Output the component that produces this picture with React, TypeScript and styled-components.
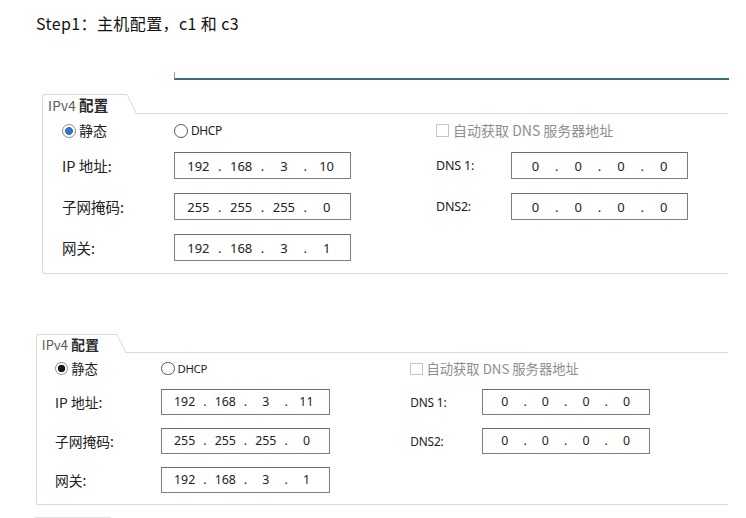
import React from 'react'
import styled, { createGlobalStyle } from 'styled-components'

const GlobalStyle = createGlobalStyle`
  html, body {
    margin: 0;
    padding: 0;
    background: #fff;
  }
  body {
    font-family: "Noto Sans CJK SC", "Noto Sans", sans-serif;
    color: #1e1e1e;
    overflow: hidden;
  }
`

const Page = styled.div`
  width: 746px;
  height: 518px;
  overflow: hidden;
  display: flex;
  flex-direction: column;
`

const StepText = styled.p`
  margin: 13px 0 0 36px;
  font-size: 16px;
  line-height: 21px;
  letter-spacing: 0.4px;
  color: #111;
`

// bottom edge of the screenshot above, cropped off
const ImageEdge = styled.div`
  margin: 38px 17px 0 174px;
  height: 6px;
  border-left: 1px solid #7fa7b0;
  border-bottom: 2px solid #3e6d77;
`

const PanelSlot = styled.div<{ $top: number; $left: number }>`
  margin-top: ${({ $top }) => $top}px;
  margin-left: ${({ $left }) => $left}px;
`

const Panel = styled.section<{ $zoom: number; $width: number }>`
  zoom: ${({ $zoom }) => $zoom};
  width: ${({ $width, $zoom }) => $width / $zoom}px;
`

const Header = styled.div`
  display: flex;
  height: 20px;
`

const Tab = styled.div`
  width: 85px;
  box-sizing: border-box;
  padding-left: 5px;
  border-top: 1px solid #d9d9d9;
  border-left: 1px solid #d9d9d9;
  border-top-left-radius: 3px;
  font-size: 13.5px;
  line-height: 20px;
  color: #5a5a5a;
  white-space: nowrap;
  letter-spacing: 0.2px;

  b {
    color: #2a2a2a;
    font-weight: 700;
    font-size: 14.5px;
  }
`

const Slant = styled.svg`
  flex: none;
  display: block;
`

const Rule = styled.div`
  flex: 1;
  border-bottom: 1px solid #d9d9d9;
`

const Body = styled.div`
  border-left: 1px solid #d9d9d9;
  border-bottom: 1px solid #d9d9d9;
  border-bottom-left-radius: 3px;
  padding: 9px 0 12px 19px;
  display: grid;
  grid-template-columns: 112px 262px 75px 177px;
  grid-template-rows: 15px repeat(3, 27px);
  row-gap: 14px;
  align-items: center;
`

const Choice = styled.span`
  display: inline-flex;
  align-items: center;
  gap: 3px;
  font-size: 14px;
  line-height: 15px;
  white-space: nowrap;
`

const ChoiceLatin = styled(Choice)`
  font-family: "Noto Sans", sans-serif;
  font-size: 12px;
  letter-spacing: -0.4px;
`

const RadioMark = styled.span<{ $dot?: string }>`
  width: 14px;
  height: 14px;
  box-sizing: border-box;
  border-radius: 50%;
  border: 1px solid ${({ $dot }) => ($dot ? '#8a8a8a' : '#555')};
  background: ${({ $dot }) =>
    $dot ? `radial-gradient(circle, ${$dot} 0 3.6px, #fff 4.3px)` : '#fff'};
`

const CheckMark = styled.span`
  width: 13px;
  height: 13px;
  box-sizing: border-box;
  border: 1px solid #c6c6c6;
  background: #fff;
`

const CheckCell = styled(Choice)`
  grid-column: 3 / span 2;
  color: #8e8e8e;
  font-size: 14px;
  gap: 4px;
`

const FieldLabel = styled.span`
  font-size: 14.5px;
  color: #222;
  white-space: nowrap;
`

const LatinLabel = styled(FieldLabel)`
  font-family: "Noto Sans", sans-serif;
  font-size: 12.5px;
  letter-spacing: -0.2px;
`

const IpField = styled.div`
  width: 177px;
  height: 27px;
  box-sizing: border-box;
  border: 1px solid #7d7d7d;
  border-top-color: #6e6e6e;
  padding: 0 2px;
  display: flex;
  align-items: center;
  font-family: "Noto Sans", sans-serif;
  font-size: 13px;
  color: #222;
  background: #fff;
`

const Octet = styled.span`
  flex: 1;
  text-align: center;
`

const Dot = styled.span`
  width: 0;
  display: flex;
  justify-content: center;
`

const NextTabEdge = styled.div`
  margin: 12px 0 0 35px;
  width: 76px;
  border-top: 1px solid #e4e4e4;
`

function Ip({ value }: { value: string }) {
  const parts = value.split('.')
  return (
    <IpField>
      {parts.map((p, i) => (
        <React.Fragment key={i}>
          {i > 0 && <Dot>.</Dot>}
          <Octet>{p}</Octet>
        </React.Fragment>
      ))}
    </IpField>
  )
}

type PanelProps = {
  ip: string
  dot: string
  zoom: number
  width: number
}

function Ipv4Panel({ ip, dot, zoom, width }: PanelProps) {
  return (
    <Panel $zoom={zoom} $width={width}>
      <Header>
        <Tab>
          IPv4 <b>配置</b>
        </Tab>
        <Slant width="10" height="20" viewBox="0 0 10 20">
          <path d="M0 0.5 L9.5 20" stroke="#d9d9d9" strokeWidth="1" fill="none" />
        </Slant>
        <Rule />
      </Header>
      <Body>
        <Choice>
          <RadioMark $dot={dot} />
          静态
        </Choice>
        <ChoiceLatin>
          <RadioMark />
          DHCP
        </ChoiceLatin>
        <CheckCell>
          <CheckMark />
          自动获取 DNS 服务器地址
        </CheckCell>

        <FieldLabel>IP 地址:</FieldLabel>
        <Ip value={ip} />
        <LatinLabel>DNS 1:</LatinLabel>
        <Ip value="0.0.0.0" />

        <FieldLabel>子网掩码:</FieldLabel>
        <Ip value="255.255.255.0" />
        <LatinLabel>DNS2:</LatinLabel>
        <Ip value="0.0.0.0" />

        <FieldLabel>网关:</FieldLabel>
        <Ip value="192.168.3.1" />
      </Body>
    </Panel>
  )
}

export default function App() {
  return (
    <Page>
      <GlobalStyle />
      <StepText>Step1：主机配置，c1 和 c3</StepText>
      <ImageEdge />
      <PanelSlot $top={14} $left={42}>
        <Ipv4Panel ip="192.168.3.10" dot="#2f78c8" zoom={1} width={686} />
      </PanelSlot>
      <PanelSlot $top={60} $left={36}>
        <Ipv4Panel ip="192.168.3.11" dot="#1a1a1a" zoom={0.95} width={692} />
      </PanelSlot>
      <NextTabEdge />
    </Page>
  )
}
